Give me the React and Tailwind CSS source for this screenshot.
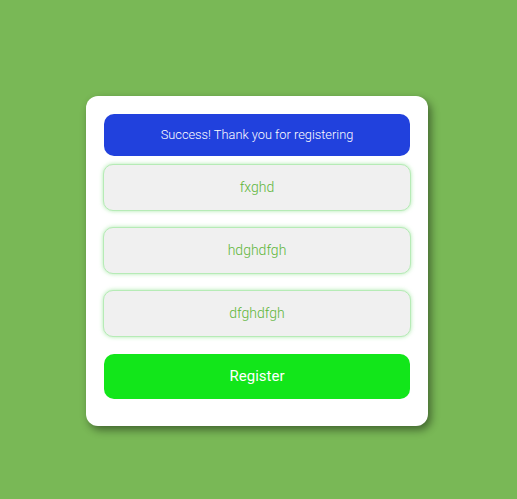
export default function App() {
  const inputs = ["fxghd", "hdghdfgh", "dfghdfgh"];
  return (
    <div className="min-h-[499px] w-full bg-[#79b856] flex justify-center pt-[96px] pr-[3px]" style={{ fontFamily: "Roboto, 'Liberation Sans', sans-serif" }}>
      <div className="w-[342px] h-[330px] bg-white rounded-[12px] shadow-[3px_4px_8px_rgba(0,0,0,0.45)] px-[18px] pt-[18px] flex flex-col font-light">
        <div className="h-[42px] rounded-[10px] bg-[#2141dd] text-white text-[12.8px] flex items-center justify-center">
          Success! Thank you for registering
        </div>
        <div className="flex flex-col gap-[16px] mt-[8px]">
          {inputs.map((v) => (
            <div
              key={v}
              className="h-[47px] -mx-[1px] rounded-[10px] bg-[#f0f0f0] border border-[#b6ebb6] shadow-[0_0_4px_rgba(120,220,120,0.6)] flex items-center justify-center text-[14px] text-[#5fb63a]"
            >
              {v}
            </div>
          ))}
        </div>
        <button className="mt-[17px] h-[45px] rounded-[10px] bg-[#12e61a] text-white text-[15px] font-normal flex items-center justify-center">
          Register
        </button>
      </div>
    </div>
  );
}
